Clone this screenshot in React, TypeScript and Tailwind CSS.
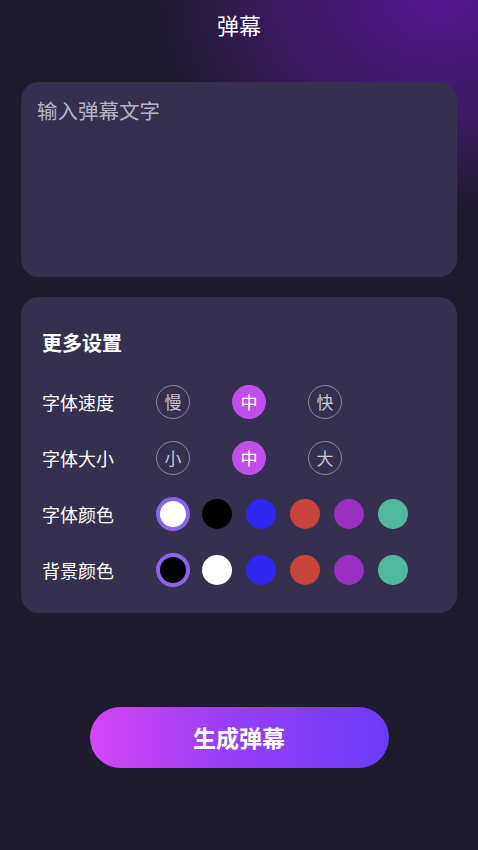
import React from "react";

const font = { fontFamily: '"Noto Sans CJK SC", "Noto Sans", sans-serif' };

function Opt({ label, active }: { label: string; active?: boolean }) {
  return active ? (
    <div className="w-[34px] h-[34px] rounded-full bg-[#c04fe9] flex items-center justify-center text-[17px] text-white">
      {label}
    </div>
  ) : (
    <div className="w-[34px] h-[34px] rounded-full border border-[#8d89a3] flex items-center justify-center text-[17px] text-[#c9c6d6]">
      {label}
    </div>
  );
}

function Swatch({ color, active }: { color: string; active?: boolean }) {
  return (
    <div className="w-[34px] h-[34px] flex items-center justify-center">
      {active ? (
        <div className="w-[34px] h-[34px] rounded-full bg-[#8b63ea] flex items-center justify-center">
          <div className="w-[26px] h-[26px] rounded-full" style={{ background: color }} />
        </div>
      ) : (
        <div className="w-[30px] h-[30px] rounded-full" style={{ background: color }} />
      )}
    </div>
  );
}

export default function App() {
  const colors = ["#3227f2", "#c6443b", "#9a2fc3", "#50b99d"];
  return (
    <div
      style={font}
      className="w-[478px] h-[850px] bg-[#1e1b2d] bg-[radial-gradient(ellipse_290px_215px_at_92%_0%,#581790_0%,#421a70_40%,rgba(30,27,45,0)_100%)] overflow-hidden flex flex-col items-center"
    >
      <div className="h-[48px] flex items-center justify-center text-white text-[22px]">弹幕</div>
      <div className="mt-[34px] w-[436px] h-[195px] rounded-[18px] bg-[#35304f] px-[16px] pt-[12px]">
        <div className="text-[20.5px] text-[#b8b4c8] leading-[32px]">输入弹幕文字</div>
      </div>
      <div className="mt-[20px] w-[436px] rounded-[18px] bg-[#35304f] pl-[21px] pt-[33px] pb-[26px] flex flex-col">
        <div className="h-[26px] leading-[26px] text-[20px] font-bold text-white">更多设置</div>
        <div className="mt-[29px] flex flex-col gap-[22px]">
          <div className="flex items-center h-[34px]">
            <div className="w-[114px] text-[18px] text-white">字体速度</div>
            <div className="flex gap-[42px]">
              <Opt label="慢" />
              <Opt label="中" active />
              <Opt label="快" />
            </div>
          </div>
          <div className="flex items-center h-[34px]">
            <div className="w-[114px] text-[18px] text-white">字体大小</div>
            <div className="flex gap-[42px]">
              <Opt label="小" />
              <Opt label="中" active />
              <Opt label="大" />
            </div>
          </div>
          <div className="flex items-center h-[34px]">
            <div className="w-[114px] text-[18px] text-white">字体颜色</div>
            <div className="flex gap-[10px]">
              <Swatch color="#ffffff" active />
              <Swatch color="#000000" />
              {colors.map((c) => (
                <Swatch key={c} color={c} />
              ))}
            </div>
          </div>
          <div className="flex items-center h-[34px]">
            <div className="w-[114px] text-[18px] text-white">背景颜色</div>
            <div className="flex gap-[10px]">
              <Swatch color="#000000" active />
              <Swatch color="#ffffff" />
              {colors.map((c) => (
                <Swatch key={c} color={c} />
              ))}
            </div>
          </div>
        </div>
      </div>
      <button className="mt-[94px] w-[299px] h-[61px] rounded-full bg-[linear-gradient(90deg,#d646f6_0%,#9a3ff6_45%,#6a3cf5_100%)] text-white text-[23px] font-bold flex items-center justify-center">
        生成弹幕
      </button>
    </div>
  );
}
